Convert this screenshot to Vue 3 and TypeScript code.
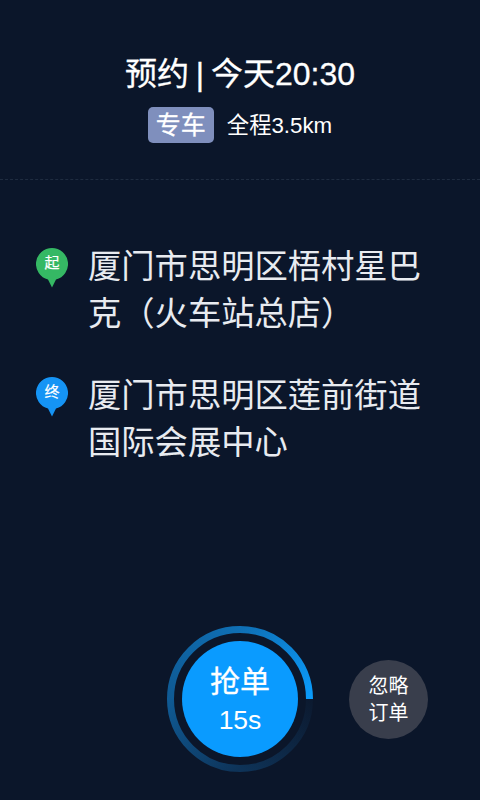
<script setup lang="ts">
const stops = [
  { title: '厦门市思明区梧村星巴克（火车站总店）', mark: '起', kind: 'start' },
  { title: '厦门市思明区莲前街道国际会展中心', mark: '终', kind: 'end' },
]
</script>

<template>
  <main class="page">
    <header class="head">
      <h1 class="title">预约 | 今天20:30</h1>
      <div class="meta">
        <span class="tag">专车</span>
        <span class="dist">全程3.5km</span>
      </div>
    </header>
    <section class="route">
      <div v-for="s in stops" :key="s.mark" class="stop">
        <span class="pin">
          <svg width="32" height="40" viewBox="0 0 32 40">
            <path :class="s.kind" d="M16 0a16 16 0 0 1 4 31.5L16 39.500l-4-8A16 16 0 0 1 16 0z" />
          </svg>
          <span class="pin-text">{{ s.mark }}</span>
        </span>
        <p class="addr">{{ s.title }}</p>
      </div>
    </section>
    <footer class="actions">
      <button class="grab">
        <svg class="ring" width="146" height="146" viewBox="0 0 146 146">
          <defs>
            <linearGradient id="q1" x1="0" y1="0" x2="1" y2="1"><stop offset="0" stop-color="#0f6fb4" /><stop offset="1" stop-color="#0a9bfb" /></linearGradient>
            <linearGradient id="q2" x1="0" y1="1" x2="1" y2="0"><stop offset="0" stop-color="#0f5a94" /><stop offset="1" stop-color="#0f6fb4" /></linearGradient>
            <linearGradient id="q3" x1="1" y1="1" x2="0" y2="0"><stop offset="0" stop-color="#0e3358" /><stop offset="1" stop-color="#0f5a94" /></linearGradient>
            <linearGradient id="q4" x1="1" y1="0" x2="0" y2="1"><stop offset="0" stop-color="#0c1a30" /><stop offset="1" stop-color="#0e3358" /></linearGradient>
          </defs>
          <g fill="none" stroke-width="7">
            <path d="M73 3.5A69.5 69.5 0 0 1 142.5 73" stroke="url(#q1)" />
            <path d="M3.5 73A69.5 69.5 0 0 1 73 3.5" stroke="url(#q2)" />
            <path d="M73 142.500A69.5 69.5 0 0 1 3.5 73" stroke="url(#q3)" />
            <path d="M142.5 73A69.5 69.5 0 0 1 73 142.5" stroke="url(#q4)" />
          </g>
        </svg>
        <span class="grab-core">
          <span class="grab-label">抢单</span>
          <span class="grab-time">15s</span>
        </span>
      </button>
      <button class="skip">忽略<br />订单</button>
    </footer>
  </main>
</template>

<style scoped>
.page {
  width: 480px;
  height: 800px;
  display: flex;
  flex-direction: column;
  background: #0b162a;
  color: #fff;
  font-family: "Liberation Sans", "Noto Sans CJK SC", sans-serif;
  overflow: hidden;
}
.head {
  height: 180px;
  box-sizing: border-box;
  padding-top: 53px;
  border-bottom: 1px dashed #1f2c40;
  text-align: center;
}
.title {
  margin: 0;
  font-size: 32px;
  line-height: 42px;
  font-weight: 400;
  word-spacing: -2px;
  -webkit-text-stroke: 0.3px #fff;
}
.meta {
  margin-top: 12px;
  display: flex;
  justify-content: center;
  align-items: center;
  gap: 13px;
}
.tag {
  width: 66px;
  height: 36px;
  border-radius: 5px;
  background: #7f8fbd;
  font-size: 25px;
  line-height: 36px;
  -webkit-text-stroke: 0.3px #fff;
}
.dist {
  font-size: 22.3px;
  line-height: 36px;
  position: relative;
  top: 1px;
}
.route {
  flex: 1;
  padding: 62px 36px 0;
  display: flex;
  flex-direction: column;
  gap: 34px;
}
.stop {
  display: flex;
  gap: 20px;
}
.pin {
  position: relative;
  flex: none;
  width: 32px;
  height: 40px;
  margin-top: 6px;
}
.pin svg { display: block; }
.start { fill: #35b864; }
.end { fill: #1594f5; }
.pin-text {
  position: absolute;
  left: 0;
  top: 6px;
  width: 32px;
  text-align: center;
  font-size: 15px;
  line-height: 18px;
  -webkit-text-stroke: 0.2px #fff;
}
.addr {
  margin: 1px 0 0;
  width: 340px;
  font-size: 33.3px;
  line-height: 47px;
  color: #e8ebf0;
}
.actions {
  height: 174px;
  box-sizing: border-box;
  padding-left: 167px;
  display: flex;
  align-items: flex-start;
}
.grab, .skip {
  padding: 0;
  border: 0;
  font: inherit;
  color: #fff;
}
.grab {
  position: relative;
  width: 146px;
  height: 146px;
  background: none;
  display: flex;
  align-items: center;
  justify-content: center;
}
.ring { position: absolute; inset: 0; }
.grab-core {
  width: 116px;
  height: 116px;
  border-radius: 50%;
  background: #0a9bff;
  display: flex;
  flex-direction: column;
  align-items: center;
  justify-content: center;
}
.grab-label { font-size: 30px; line-height: 40px; -webkit-text-stroke: 0.3px #fff; }
.grab-time { font-size: 26.5px; line-height: 34px; position: relative; top: 1px; }
.skip {
  width: 79px;
  height: 79px;
  margin: 34px 0 0 36px;
  border-radius: 50%;
  background: #393e4c;
  font-size: 20px;
  line-height: 27px;
}
</style>
